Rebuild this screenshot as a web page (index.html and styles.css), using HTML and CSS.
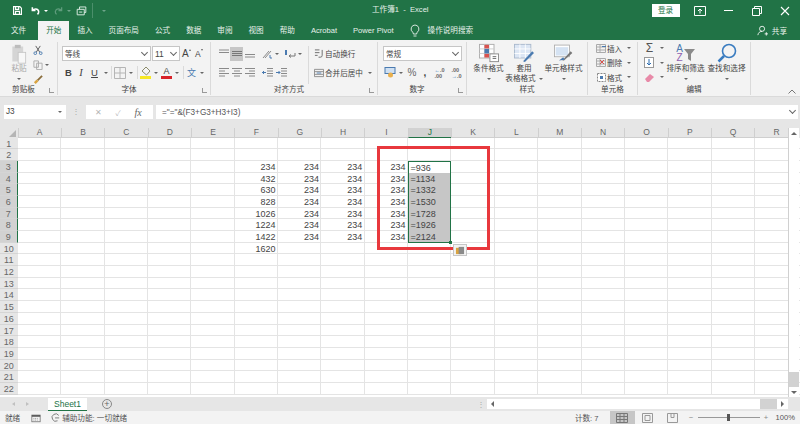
FILE: index.html
```html
<!DOCTYPE html>
<html lang="zh-CN">
<head>
  <meta charset="UTF-8" />
  <title>工作簿1 - Excel</title>
  <link rel="stylesheet" href="styles.css">
</head>
<body>
  <div class="app">
    <div class="titlebar">
      <div class="qat">
        <svg width="11" height="11" viewBox="0 0 14 14"><path d="M2 2h8l2 2v8H2z M4.500 2v3.500h4V2 M4.500 12V8h5v4" fill="none" stroke="#fff" stroke-width="1.500"/></svg>
        <svg class="q-undo" width="11" height="11" viewBox="0 0 14 14"><path d="M3 3v4h4 M3.500 7C5 4.500 10 4 11 8c.3 1.500-.5 3-1.500 4" fill="none" stroke="#fff" stroke-width="2"/></svg>
        <span class="caret white q-tight"></span>
        <svg width="11" height="11" viewBox="0 0 14 14"><path d="M11 3v4H7 M10.500 7C9 4.500 4 4 3 8c-.3 1.500.5 3 1.500 4" fill="none" stroke="#5f9c7c" stroke-width="1.600"/></svg>
        <span class="caret dim q-tight"></span>
        <svg width="11" height="11" viewBox="0 0 14 14"><path d="M1.500 5.500h9v7h-9z M4.500 5.500V2.500h8v7h-2 M4 9h4" fill="none" stroke="#dfeee6" stroke-width="1.200"/></svg>
        <span class="qat-sep"></span>
        <span class="caret dim qat-more"></span>
      </div>
      <div class="doc-title">工作簿1&nbsp; -&nbsp; Excel</div>
      <div class="win">
        <span class="login">登录</span>
        <svg width="12" height="10" viewBox="0 0 12 10"><path d="M.5.500h11v9H.5z M6 7.500V3 M4 5l2-2 2 2" fill="none" stroke="#fff"/></svg>
        <span class="win-min"></span>
        <svg width="10" height="10" viewBox="0 0 10 10"><path d="M.5 2.500h7v7h-7z M2.500 2.500v-2h7v7h-2" fill="none" stroke="#fff"/></svg>
        <svg width="10" height="10" viewBox="0 0 10 10"><path d="M1 1l8 8M9 1L1 9" stroke="#fff" stroke-width="1.100"/></svg>
      </div>
    </div>

    <div class="tabs">
      <span class="tab">文件</span>
      <span class="tab active">开始</span>
      <span class="tab">插入</span>
      <span class="tab">页面布局</span>
      <span class="tab">公式</span>
      <span class="tab">数据</span>
      <span class="tab">审阅</span>
      <span class="tab">视图</span>
      <span class="tab">帮助</span>
      <span class="tab">Acrobat</span>
      <span class="tab">Power Pivot</span>
      <span class="tab search">
        <svg width="10" height="14" viewBox="0 0 10 14"><path d="M5 1a4 4 0 0 0-2.300 7.200c.5.500.6 1 .6 1.800h3.400c0-.8.100-1.300.6-1.800A4 4 0 0 0 5 1z M3.500 12h3" fill="none" stroke="#fff" stroke-width=".8"/></svg>
        操作说明搜索
      </span>
      <span class="share">
        <svg width="11" height="11" viewBox="0 0 13 13"><circle cx="6" cy="4.500" r="3" fill="none" stroke="#fff"/><path d="M1 12c.5-3 2.500-4.500 5-4.500 M9 10.500h4 M11 8.500v4" fill="none" stroke="#fff"/></svg>
        共享
      </span>
    </div>

    <div class="ribbon">
      <section class="group g-clip">
        <div class="group-body clip">
          <div class="paste">
            <svg width="18" height="20" viewBox="0 0 18 24"><rect x="1" y="3" width="13" height="18" fill="#d5d5d5"/><rect x="4" y="1" width="7" height="4" fill="#bdbdbd"/><rect x="8" y="10" width="9" height="13" fill="#f7f7f7" stroke="#c4c4c4"/></svg>
            <span class="dim-text">粘贴</span>
            <span class="caret"></span>
          </div>
          <div class="clip-tools">
            <svg width="10" height="10" viewBox="0 0 11 11"><path d="M3 1l4.500 7M8 1L3.500 8" stroke="#555"/><circle cx="2.500" cy="9" r="1.500" fill="none" stroke="#4a7ab0"/><circle cx="8.500" cy="9" r="1.500" fill="none" stroke="#4a7ab0"/></svg>
            <span class="tool-line">
              <svg width="10" height="10" viewBox="0 0 11 11"><path d="M1 1h5v7H1z M4 3.500h6v7H4z" fill="#f3f3f3" stroke="#aaa"/></svg>
              <span class="caret"></span>
            </span>
            <svg width="10" height="10" viewBox="0 0 11 11"><path d="M5 6l5-5" stroke="#8a6d3b" stroke-width="2"/><path d="M1 8l3-3 2 2-3 3z" fill="#d9a441"/></svg>
          </div>
        </div>
        <div class="group-label pad">剪贴板<i class="launcher"></i></div>
      </section>

      <section class="group g-font">
        <div class="group-body rows">
          <div class="line">
            <span class="select font-name">等线<i class="chev"></i></span>
            <span class="select font-size">11<i class="chev"></i></span>
            <span class="size-btn">A<sup class="up-mark"></sup></span>
            <span class="size-btn small">A<sup class="down-mark"></sup></span>
          </div>
          <div class="line font-tools">
            <b class="glyph">B</b>
            <i class="glyph ital">I</i>
            <u class="glyph">U</u>
            <span class="caret"></span>
            <span class="vsep"></span>
            <svg width="12" height="12" viewBox="0 0 12 12"><path d="M.5.500h11v11H.5z M6 .5v11 M.5 6h11" fill="none" stroke="#b5b5b5"/></svg>
            <span class="caret"></span>
            <span class="vsep"></span>
            <span class="swatch-icon">
              <svg width="12" height="9" viewBox="0 0 12 9"><path d="M6 0l4 4-3.500 4L2 4z" fill="#f5f5f5" stroke="#8b8b6a"/></svg>
              <i class="swatch yellow"></i>
            </span>
            <span class="caret"></span>
            <span class="swatch-icon">
              <span class="a-mark">A</span>
              <i class="swatch red"></i>
            </span>
            <span class="caret"></span>
            <span class="vsep"></span>
            <span class="wen">文</span>
            <span class="caret"></span>
          </div>
        </div>
        <div class="group-label pad">字体<i class="launcher"></i></div>
      </section>

      <section class="group g-align">
        <div class="group-body align-body">
          <div class="rows align-icons">
            <div class="line">
              <span class="al"><svg width="10" height="9" viewBox="0 0 10 9"><path d="M0 1h10M0 3.500h10" stroke="#8a8a8a"/></svg></span>
              <span class="al on"><svg width="10" height="9" viewBox="0 0 10 9"><path d="M0 2.500h10M0 4.500h10M0 6.500h10" stroke="#777"/></svg></span>
              <span class="al"><svg width="10" height="9" viewBox="0 0 10 9"><path d="M0 5.500h10M0 8h10" stroke="#8a8a8a"/></svg></span>
              <span class="al-gap"></span>
              <span class="al tall"><svg width="11" height="10" viewBox="0 0 11 10"><path d="M1 9l6-7M3 9l6-7" stroke="#8a8a8a"/><path d="M8 6v3h2" fill="none" stroke="#4a7ab0"/></svg></span>
              <span class="caret"></span>
              <span class="al tall push"><svg width="11" height="10" viewBox="0 0 11 10"><path d="M1 1v5" stroke="#4a7ab0" stroke-width="2"/><path d="M4 7h6V4 M4 7l2-1.500M4 7l2 1.500" fill="none" stroke="#777"/></svg></span>
              <span class="caret"></span>
            </div>
            <div class="line">
              <span class="al"><svg width="10" height="9" viewBox="0 0 10 9"><path d="M0 .5h10M0 3h6M0 5.500h10M0 8h6" stroke="#8a8a8a"/></svg></span>
              <span class="al"><svg width="10" height="9" viewBox="0 0 10 9"><path d="M0 .5h10M2 3h6M0 5.500h10M2 8h6" stroke="#8a8a8a"/></svg></span>
              <span class="al"><svg width="10" height="9" viewBox="0 0 10 9"><path d="M0 .5h10M4 3h6M0 5.500h10M4 8h6" stroke="#8a8a8a"/></svg></span>
              <span class="al-gap"></span>
              <span class="al tall"><svg width="11" height="9" viewBox="0 0 11 9"><path d="M5 .5h6M5 3h6M5 5.500h6M5 8h6" stroke="#8a8a8a"/><path d="M4 4.500H0M2 3L.5 4.500 2 6" fill="none" stroke="#4a7ab0"/></svg></span>
              <span class="al"><svg width="11" height="9" viewBox="0 0 11 9"><path d="M5 .5h6M5 3h6M5 5.500h6M5 8h6" stroke="#8a8a8a"/><path d="M0 4.500h4M2.500 3L4 4.500 2.500 6" fill="none" stroke="#4a7ab0"/></svg></span>
            </div>
          </div>
          <span class="vsep block"></span>
          <div class="rows text-tools">
            <div class="line text-tool">
              <svg width="10" height="10" viewBox="0 0 11 11"><path d="M1 1h5M1 4h5M1 7h3 M9 1v6a2 2 0 0 1-2 2H5" fill="none" stroke="#666"/></svg>
              自动换行
            </div>
            <div class="line text-tool">
              <svg width="10" height="10" viewBox="0 0 11 11"><path d="M.5 1.500h10v8H.5z M.5 4h10M.5 7h10" fill="none" stroke="#8a8a8a"/><path d="M3 5.500h5" stroke="#4a7ab0"/></svg>
              合并后居中
              <span class="caret"></span>
            </div>
          </div>
        </div>
        <div class="group-label pad">对齐方式<i class="launcher"></i></div>
      </section>

      <section class="group g-num">
        <div class="group-body rows">
          <div class="line"><span class="select num-format">常规<i class="chev"></i></span></div>
          <div class="line num-tools">
            <svg width="13" height="11" viewBox="0 0 12 11"><rect x=".5" y=".5" width="10" height="6" fill="#cfe0f2" stroke="#4a7ab0"/><circle cx="6" cy="8" r="2.500" fill="#e9b04e"/></svg>
            <span class="caret"></span>
            <span class="num-glyph pct">%</span>
            <b class="num-glyph comma">,</b>
            <span class="decimals"><em>←</em>.0<br>.00</span>
            <span class="decimals">.00<br><em>→</em>.0</span>
          </div>
        </div>
        <div class="group-label pad">数字<i class="launcher"></i></div>
      </section>

      <section class="group g-style">
        <div class="group-body bigs">
          <div class="big b-cond">
            <svg width="20" height="20" viewBox="0 0 22 20"><rect x=".5" y=".5" width="16" height="15" fill="#fff" stroke="#aaa"/><path d="M6 .5v15M11 .5v15M.5 5.500h16M.5 10.500h16" stroke="#ccc"/><rect x="6" y="1" width="5" height="4" fill="#d9534f"/><rect x="6" y="5.500" width="5" height="5" fill="#4a7ab0"/><rect x="6" y="11" width="5" height="4" fill="#d9534f"/><rect x="12" y="11" width="9.500" height="8.500" fill="#fff" stroke="#888"/><path d="M15 14h4M15 16h4" stroke="#666"/></svg>
            <span>条件格式</span>
            <span class="caret"></span>
          </div>
          <div class="big b-table">
            <svg width="20" height="20" viewBox="0 0 22 20"><rect x=".5" y=".5" width="18" height="15" fill="#dce6f4" stroke="#a9b8cc"/><path d="M6.500 .5v15M12.500 .5v15M.5 5.500h18M.5 10.500h18" stroke="#fff"/><path d="M10 19l10-11 2 2-10 10z" fill="#4a7ab0"/></svg>
            <span>套用<br>表格格式<i class="caret inline"></i></span>
          </div>
          <div class="big b-cell">
            <svg width="20" height="20" viewBox="0 0 24 20"><rect x=".5" y=".5" width="18" height="14" fill="#fff" stroke="#aaa"/><rect x="2" y="3" width="15" height="10" fill="#d5e3f3"/><path d="M10 19l10-11 2 2-10 9z" fill="#777"/><path d="M6 19l5-4 2 3z" fill="#4a7ab0"/></svg>
            <span>单元格样式</span>
            <span class="caret"></span>
          </div>
        </div>
        <div class="group-label">样式</div>
      </section>

      <section class="group g-cells">
        <div class="group-body stack">
          <div class="stack-line">
            <svg width="11" height="11" viewBox="0 0 11 11"><path d="M.5 1.500h9v8h-9z M.5 4h9M.5 7h9M4 1.500v8" fill="none" stroke="#aaa"/><path d="M6 3.500h4" stroke="#4a7ab0"/></svg>
            插入<span class="caret"></span>
          </div>
          <div class="stack-line">
            <svg width="11" height="11" viewBox="0 0 11 11"><path d="M.5 1.500h9v8h-9z M.5 4h9M.5 7h9M4 1.500v8" fill="none" stroke="#aaa"/><path d="M4 3l4 4M8 3L4 7" stroke="#d9534f"/></svg>
            删除<span class="caret"></span>
          </div>
          <div class="stack-line">
            <svg width="11" height="11" viewBox="0 0 11 11"><path d="M1.500 1.500h8v8h-8z" fill="#fff" stroke="#888" stroke-dasharray="2 1"/><rect x="4" y="4" width="3" height="3" fill="#4a7ab0"/></svg>
            格式<span class="caret"></span>
          </div>
        </div>
        <div class="group-label">单元格</div>
      </section>

      <section class="group g-edit">
        <div class="group-body edit-body">
          <div class="edit-stack">
            <div class="stack-line"><span class="sigma">Σ</span><span class="caret"></span></div>
            <div class="stack-line">
              <svg width="11" height="11" viewBox="0 0 11 11"><rect x=".5" y=".5" width="9" height="10" fill="#fff" stroke="#999"/><path d="M5 2v6M3 6l2 2 2-2" fill="none" stroke="#2b6cb0"/></svg>
              <span class="caret"></span>
            </div>
            <div class="stack-line">
              <svg width="11" height="11" viewBox="0 0 11 11"><path d="M1 7l5-5 4 3-5 5H3z" fill="#e88aa8"/></svg>
              <span class="caret"></span>
            </div>
          </div>
          <div class="big b-sort">
            <div class="sort-icon">
              <span class="az"><em>A</em><em class="z">Z</em></span>
              <svg width="11" height="12" viewBox="0 0 11 12"><path d="M0 0h11L7 5v7L4 10V5z" fill="#8a8a8a"/></svg>
            </div>
            <span>排序和筛选</span>
            <span class="caret"></span>
          </div>
          <div class="big b-find">
            <svg width="20" height="20" viewBox="0 0 20 20"><circle cx="12" cy="8" r="6.500" fill="none" stroke="#3a7cc0" stroke-width="1.600"/><path d="M7 13l-5.500 5.500" stroke="#3a7cc0" stroke-width="2.500"/></svg>
            <span>查找和选择</span>
            <span class="caret"></span>
          </div>
        </div>
        <div class="group-label">编辑</div>
      </section>

      <div class="ribbon-end">
        <svg width="8" height="5" viewBox="0 0 8 5"><path d="M.5 4.500L4 1l3.500 3.500" fill="none" stroke="#777"/></svg>
      </div>
    </div>

    <div class="formula-bar">
      <div class="name-box">J3<span class="caret"></span></div>
      <div class="fb-dots">⋮</div>
      <div class="fx-box">
        <span class="fx-btn">✕</span>
        <span class="fx-btn">✓</span>
        <span class="fx-btn fx">fx</span>
      </div>
      <div class="formula">="="&amp;(F3+G3+H3+I3)<i class="chev"></i></div>
    </div>

    <div class="sheet">
      <div class="row head">
        <span class="corner"><i></i></span>
        <span class="ch">A</span><span class="ch">B</span><span class="ch">C</span><span class="ch">D</span><span class="ch">E</span><span class="ch">F</span><span class="ch">G</span><span class="ch">H</span><span class="ch">I</span><span class="ch picked">J</span><span class="ch">K</span><span class="ch">L</span><span class="ch">M</span><span class="ch">N</span><span class="ch">O</span><span class="ch">P</span><span class="ch">Q</span><span class="ch">R</span>
      </div>
      <div class="row"><span class="rh">1</span></div>
      <div class="row"><span class="rh">2</span></div>
      <div class="row"><span class="rh picked">3</span><span class="c f">234</span><span class="c g">234</span><span class="c h">234</span><span class="c i">234</span><span class="c j active-cell">=936</span></div>
      <div class="row"><span class="rh picked">4</span><span class="c f">432</span><span class="c g">234</span><span class="c h">234</span><span class="c i">234</span><span class="c j sel">=1134</span></div>
      <div class="row"><span class="rh picked">5</span><span class="c f">630</span><span class="c g">234</span><span class="c h">234</span><span class="c i">234</span><span class="c j sel">=1332</span></div>
      <div class="row"><span class="rh picked">6</span><span class="c f">828</span><span class="c g">234</span><span class="c h">234</span><span class="c i">234</span><span class="c j sel">=1530</span></div>
      <div class="row"><span class="rh picked">7</span><span class="c f">1026</span><span class="c g">234</span><span class="c h">234</span><span class="c i">234</span><span class="c j sel">=1728</span></div>
      <div class="row"><span class="rh picked">8</span><span class="c f">1224</span><span class="c g">234</span><span class="c h">234</span><span class="c i">234</span><span class="c j sel">=1926</span></div>
      <div class="row"><span class="rh picked">9</span><span class="c f">1422</span><span class="c g">234</span><span class="c h">234</span><span class="c i">234</span><span class="c j sel last">=2124</span></div>
      <div class="row"><span class="rh">10</span><span class="c f">1620</span></div>
      <div class="row"><span class="rh">11</span></div>
      <div class="row"><span class="rh">12</span></div>
      <div class="row"><span class="rh">13</span></div>
      <div class="row"><span class="rh">14</span></div>
      <div class="row"><span class="rh">15</span></div>
      <div class="row"><span class="rh">16</span></div>
      <div class="row"><span class="rh">17</span></div>
      <div class="row"><span class="rh">18</span></div>
      <div class="row"><span class="rh">19</span></div>
      <div class="row"><span class="rh">20</span></div>
      <div class="row"><span class="rh">21</span></div>
      <div class="row"><span class="rh">22</span></div>

      <div class="vscroll">
        <span class="sb-btn"><i class="tri up"></i></span>
        <span class="sb-thumb"></span>
        <span class="sb-track"></span>
        <span class="sb-btn"><i class="tri down"></i></span>
      </div>
      <div class="red-box"></div>
      <div class="paste-tag">
        <svg width="10" height="9" viewBox="0 0 11 10"><rect x="1" y="2" width="6" height="7" fill="#d9a441"/><rect x="4" y="1" width="6" height="8" fill="#8a8a8a"/></svg>
      </div>
    </div>

    <div class="sheet-tabs">
      <span class="nav-tri left"></span>
      <span class="nav-tri right"></span>
      <span class="sheet-tab">Sheet1</span>
      <span class="add-sheet">+</span>
      <span class="tab-dots">⋮</span>
      <div class="hscroll">
        <span class="h-btn"><i class="tri left"></i></span>
        <span class="h-thumb"></span>
        <span class="h-track"></span>
        <span class="h-btn"><i class="tri right"></i></span>
      </div>
    </div>

    <div class="statusbar">
      <span class="st-text">就绪</span>
      <svg width="10" height="10" viewBox="0 0 12 11"><rect x="1" y="2" width="10" height="8" fill="none" stroke="#777"/><path d="M1 3h10" stroke="#555" stroke-width="2"/><path d="M3 6h6M3 8h6" stroke="#888" stroke-dasharray="1 1"/></svg>
      <span class="st-access">
        <svg width="9" height="9" viewBox="0 0 11 11"><path d="M9.500 3A4.500 4.500 0 1 0 8 9.500 M5 6h5" fill="none" stroke="#666"/></svg>
        辅助功能: 一切就绪
      </span>
      <span class="st-right">
        <span class="st-count">计数: 7</span>
        <span class="view on"><svg width="12" height="10" viewBox="0 0 12 10"><path d="M.5.500h11v9H.5z M4 .5v9M8 .5v9M.5 3.500h11M.5 6.500h11" fill="none" stroke="#777"/></svg></span>
        <span class="view"><svg width="11" height="10" viewBox="0 0 11 10"><path d="M.5.500h10v9H.5z M3 2.500h5v5H3z" fill="none" stroke="#999"/></svg></span>
        <span class="view"><svg width="11" height="10" viewBox="0 0 11 10"><path d="M.5.500h10v9H.5z M4 .5v4h3v-4" fill="none" stroke="#999"/></svg></span>
        <span class="zoom-sign">−</span>
        <span class="zoom-track"><i></i></span>
        <span class="zoom-sign">+</span>
        <span class="zoom-pct">100%</span>
      </span>
    </div>
  </div>
</body>
</html>
```

FILE: styles.css
```css
* {
  box-sizing: border-box;
}

body {
  margin: 0;
  font-family: "Liberation Sans", "Noto Sans CJK SC", sans-serif;
  font-size: 7.600px;
  color: #444;
  background: #e6e6e6;
}

svg {
  display: block;
  flex: none;
}

.app {
  width: 800px;
  height: 424px;
  overflow: hidden;
  display: flex;
  flex-direction: column;
}

/* title bar + tabs */
.titlebar {
  height: 21px;
  background: #217346;
  color: #e6f1ea;
  display: flex;
  align-items: center;
  position: relative;
  flex: none;
}

.qat {
  display: flex;
  align-items: center;
  gap: 5px;
  padding-left: 12px;
}

.q-undo {
  margin-left: 2px;
}

.q-tight {
  margin-left: -2px;
}

.qat-sep {
  width: 1px;
  height: 15px;
  background: #4b8f6b;
}

.qat-more {
  margin-left: 4px;
}

.doc-title {
  position: absolute;
  left: 372px;
  top: 4px;
  line-height: 12px;
}

.win {
  margin-left: auto;
  display: flex;
  align-items: center;
  gap: 18.500px;
  padding-right: 10px;
}

.login {
  width: 28px;
  height: 13px;
  background: #fff;
  color: #217346;
  text-align: center;
  line-height: 13px;
  margin-right: -4.500px;
}

.win-min {
  width: 9px;
  height: 1px;
  background: #fff;
}

.tabs {
  height: 19px;
  background: #217346;
  color: #e6f1ea;
  display: flex;
  align-items: center;
  padding-left: 3px;
  flex: none;
}

.tab {
  height: 19px;
  line-height: 19px;
  padding: 0 8px;
  white-space: nowrap;
}

.tab.active {
  background: #f3f3f3;
  color: #217346;
  margin-left: 4px;
}

.tab.search {
  display: flex;
  align-items: center;
  gap: 8px;
}

.share {
  margin-left: auto;
  padding-right: 13px;
  display: flex;
  align-items: center;
  gap: 4px;
}

/* ribbon */
.ribbon {
  height: 57px;
  background: #f3f3f3;
  display: flex;
  border-bottom: 1px solid #dadada;
  flex: none;
}

.group {
  border-right: 1px solid #dadada;
  display: flex;
  flex-direction: column;
  flex: none;
  margin: 2px 0 1px;
}

.g-clip { width: 58px; }
.g-font { width: 153px; }
.g-align { width: 167px; }
.g-num { width: 89px; }
.g-style { width: 121px; }
.g-cells { width: 50px; }
.g-edit { width: 113px; }

.ribbon-end {
  flex: 1;
  display: flex;
  justify-content: flex-end;
  align-items: flex-end;
  padding: 0 4px 2px 0;
}

.group-body {
  flex: 1;
  min-height: 0;
}

.group-label {
  height: 10px;
  line-height: 10px;
  text-align: center;
  position: relative;
  flex: none;
}

.group-label.pad {
  padding-right: 10px;
}

.launcher {
  position: absolute;
  right: 3px;
  top: 3px;
  width: 5px;
  height: 5px;
  border-left: 1px solid #999;
  border-bottom: 1px solid #999;
}

.rows {
  display: flex;
  flex-direction: column;
  gap: 4px;
  padding: 4px 0 0 4px;
}

.line {
  display: flex;
  align-items: center;
  height: 15px;
}

.caret {
  display: inline-block;
  width: 0;
  height: 0;
  flex: none;
  border-left: 2px solid transparent;
  border-right: 2px solid transparent;
  border-top: 2px solid #666;
}

.caret.white { border-top-color: #fff; }
.caret.dim { border-top-color: #6ea58a; }
.caret.inline { margin-left: 3px; vertical-align: middle; }

.chev {
  width: 5px;
  height: 5px;
  border-right: 1px solid #666;
  border-bottom: 1px solid #666;
  transform: rotate(45deg);
  margin: -3px 3px 0 auto;
  display: block;
  flex: none;
}

.vsep {
  width: 1px;
  height: 13px;
  background: #dadada;
  flex: none;
}

.vsep.block {
  height: 38px;
  margin: 4px 5px 0 3px;
}

/* clipboard */
.clip {
  display: flex;
  padding: 2px 0 0 10px;
  gap: 5px;
}

.paste {
  width: 18px;
  display: flex;
  flex-direction: column;
  align-items: center;
}

.dim-text {
  line-height: 10px;
  white-space: nowrap;
  color: #a8a8a8;
}

.paste .caret {
  margin-top: 4px;
}

.clip-tools {
  display: flex;
  flex-direction: column;
  gap: 5px;
  padding-top: 1px;
}

.tool-line {
  display: flex;
  align-items: center;
  gap: 2px;
}

/* font */
.select {
  height: 15px;
  background: #fff;
  border: 1px solid #c6c6c6;
  display: flex;
  align-items: center;
  padding-left: 2px;
}

.font-name { width: 89px; }
.font-size { width: 28px; margin-left: 1px; font-size: 8.500px; }

.size-btn {
  font-size: 10px;
  margin-left: 2px;
  width: 12px;
  line-height: 14px;
  position: relative;
}

.size-btn.small {
  font-size: 8.500px;
  margin-left: 1px;
}

.up-mark,
.down-mark {
  position: absolute;
  left: 7px;
  top: 2px;
  width: 0;
  height: 0;
  border-left: 1.500px solid transparent;
  border-right: 1.500px solid transparent;
}

.up-mark { border-bottom: 2px solid #666; }
.down-mark { border-top: 2px solid #666; left: 6px; }

.font-tools {
  display: grid;
  grid-template-columns: 13px 12px 15px 8px 3px 14px 8px 4px 13px 8px 13px 8px 4px 13px 8px;
  justify-items: center;
  align-items: center;
}

.glyph {
  font-size: 9.500px;
  text-align: center;
  font-family: "Liberation Sans", sans-serif;
}

.glyph.ital {
  font-family: "Liberation Serif", serif;
  font-size: 10.500px;
}

.swatch-icon {
  width: 12px;
  display: flex;
  flex-direction: column;
  align-items: center;
}

.swatch {
  width: 11px;
  height: 3px;
  display: block;
}

.yellow { background: #f7e825; }
.red { background: #d8232a; }

.a-mark {
  font-size: 9px;
  line-height: 9px;
}

.wen {
  color: #4a7ab0;
  font-size: 9px;
}

/* alignment */
.align-body {
  display: flex;
}

.align-icons {
  width: 94px;
  padding-left: 6px;
}

.al {
  width: 13px;
  height: 14px;
  display: flex;
  align-items: center;
  justify-content: center;
  flex: none;
}

.al.on { background: #c6c6c6; }
.al.tall { width: 15px; }
.al.push { margin-left: 4px; }

.al-gap {
  width: 4px;
  flex: none;
}

.text-tools {
  padding-left: 0;
}

.text-tool {
  white-space: nowrap;
}

.text-tool svg {
  margin-right: 1px;
}

.text-tool .caret {
  margin-left: 5px;
}

/* number */
.num-format {
  width: 79px;
  margin-left: 1px;
}

.num-tools {
  padding-left: 1px;
  display: grid;
  grid-template-columns: 14px 8px 14px 12px 17px 17px;
  justify-items: center;
  align-items: center;
}

.num-glyph {
  font-size: 10px;
}

.pct { color: #666; }

.decimals {
  font-size: 5.500px;
  line-height: 6px;
  font-weight: bold;
  color: #666;
}

.decimals em {
  font-style: normal;
  color: #3a7cc0;
}

/* styles + editing */
.bigs {
  display: flex;
  padding-left: 5px;
}

.big {
  display: flex;
  flex-direction: column;
  align-items: center;
  padding-top: 1px;
  line-height: 10px;
  text-align: center;
  white-space: nowrap;
}

.big svg {
  margin-bottom: 1px;
}

.big > .caret {
  margin-top: 4px;
}

.b-cond { width: 33px; }
.b-table { width: 38px; }
.b-cell { width: 41px; }

/* cells */
.stack {
  display: flex;
  flex-direction: column;
  gap: 3.500px;
  padding: 0.500px 0 0 8px;
}

.stack-line {
  display: flex;
  align-items: center;
  height: 11px;
  white-space: nowrap;
}

.stack-line .caret {
  margin-left: 5px;
}

.stack-line svg {
  margin-right: 0;
}

.edit-body {
  display: flex;
}

.edit-stack {
  width: 27px;
  padding: 0.500px 0 0 6px;
  display: flex;
  flex-direction: column;
  gap: 3.500px;
  flex: none;
}

.sigma {
  font-size: 12px;
  width: 11px;
  text-align: center;
  color: #555;
}

.b-sort { width: 41px; }
.b-find { width: 41px; }

.sort-icon {
  display: flex;
  align-items: center;
  height: 20px;
  margin-bottom: 1px;
  gap: 1px;
}

.sort-icon svg {
  margin: 3px 0 0;
}

.az {
  display: flex;
  flex-direction: column;
  font-size: 10px;
  line-height: 9.500px;
}

.az em {
  font-style: normal;
  color: #4a7ab0;
}

.az .z { color: #8e5fb0; }

/* formula bar */
.formula-bar {
  height: 31px;
  padding: 8px 2px 9px 4px;
  display: flex;
  background: #e6e6e6;
  flex: none;
}

.name-box {
  width: 62px;
  background: #fff;
  padding-left: 2px;
  line-height: 14px;
  font-size: 8.200px;
  position: relative;
}

.name-box .caret {
  position: absolute;
  right: 4px;
  top: 6px;
}

.fb-dots {
  width: 20px;
  text-align: center;
  line-height: 14px;
  color: #aaa;
}

.fx-box {
  width: 67px;
  background: #fff;
  display: flex;
  align-items: center;
  padding-left: 6px;
  gap: 8px;
  color: #b5b5b5;
}

.fx-btn {
  width: 12px;
  text-align: center;
}

.fx-btn.fx {
  font-family: "Liberation Serif", serif;
  font-style: italic;
  color: #666;
  font-size: 10px;
}

.formula {
  flex: 1;
  margin-left: 3px;
  background: #fff;
  padding-left: 6px;
  display: flex;
  align-items: center;
  font-size: 8.200px;
  color: #555;
}

/* sheet */
.sheet {
  height: 269px;
  background: #fff;
  position: relative;
  overflow: hidden;
  flex: none;
}

.row {
  height: 11.700px;
  display: grid;
  grid-template-columns: 17.500px repeat(18, 43.350px);
  grid-template-rows: 11.700px;
  font-size: 9px;
  line-height: 10.700px;
  background-image:
    linear-gradient(#e4e4e4, #e4e4e4),
    repeating-linear-gradient(90deg, transparent 0, transparent 42.350px, #e4e4e4 42.350px, #e4e4e4 43.350px);
  background-size: 100% 1px, 100% 100%;
  background-position: 0 100%, 17.500px 0;
  background-repeat: no-repeat;
}

.row.head {
  background: #e6e6e6;
  height: 9.500px;
  grid-template-rows: 9.500px;
  line-height: 9.500px;
  font-size: 8.500px;
}

.corner {
  position: relative;
}

.corner i {
  position: absolute;
  right: 2px;
  bottom: 1px;
  border-style: solid;
  border-width: 0 0 7px 7px;
  border-color: transparent transparent #b5b5b5 transparent;
}

.ch {
  text-align: center;
  color: #666;
  border-left: 1px solid #cfcfcf;
  border-bottom: 1px solid #cfcfcf;
}

.ch.picked {
  background: #d2d2d2;
  color: #217346;
  border-bottom: 1px solid #217346;
}

.rh {
  grid-column: 1;
  background: #e6e6e6;
  text-align: center;
  color: #666;
  padding-top: 1px;
  border-bottom: 1px solid #d5d5d5;
}

.rh.picked {
  background: #d2d2d2;
  border-right: 1px solid #217346;
}

.c {
  padding: 1px 2px 0;
  color: #444;
  text-align: right;
}

.f { grid-column: 7; }
.g { grid-column: 8; }
.h { grid-column: 9; }
.i { grid-column: 10; }

.j {
  grid-column: 11;
  text-align: left;
  border-left: 1px solid #217346;
  border-right: 1px solid #217346;
}

.active-cell {
  border-top: 1px solid #217346;
  background: #fff;
}

.sel {
  background: #c6c6c6;
}

.sel.last {
  border-bottom: 1px solid #217346;
  position: relative;
}

.sel.last::after {
  content: "";
  position: absolute;
  right: -2px;
  bottom: -2px;
  width: 3px;
  height: 3px;
  background: #217346;
}

.red-box {
  position: absolute;
  left: 377px;
  top: 18px;
  width: 113px;
  height: 104px;
  border: 3px solid #e8383d;
}

.paste-tag {
  position: absolute;
  left: 453px;
  top: 116px;
  width: 14px;
  height: 12px;
  background: #f3f3f3;
  border: 1px solid #c6c6c6;
  display: flex;
  align-items: center;
  justify-content: center;
}

.vscroll {
  position: absolute;
  right: 1px;
  top: 0;
  bottom: 0;
  width: 11px;
  background: #e6e6e6;
  border-left: 1px solid #d0d0d0;
  display: flex;
  flex-direction: column;
}

.sb-btn {
  height: 10px;
  background: #fff;
  display: flex;
  align-items: center;
  justify-content: center;
  flex: none;
}

.sb-thumb {
  height: 234px;
  background: #fff;
}

.sb-track {
  flex: 1;
  background: #d2d2d2;
}

.tri {
  display: block;
  width: 0;
  height: 0;
  border-style: solid;
}

.tri.up { border-width: 0 3px 3px; border-color: transparent transparent #666; }
.tri.down { border-width: 3px 3px 0; border-color: #666 transparent transparent; }
.tri.right { border-width: 3px 0 3px 3px; border-color: transparent transparent transparent #666; }
.tri.left { border-width: 3px 3px 3px 0; border-color: transparent #666 transparent transparent; }

/* sheet tabs */
.sheet-tabs {
  height: 14px;
  background: #e6e6e6;
  display: flex;
  align-items: center;
  flex: none;
}

.nav-tri {
  width: 0;
  height: 0;
  border-style: solid;
  border-color: transparent;
}

.nav-tri.left {
  margin-left: 12px;
  border-width: 2px 3px 2px 0;
  border-right-color: #c0c0c0;
}

.nav-tri.right {
  margin-left: 11px;
  border-width: 2px 0 2px 3px;
  border-left-color: #c0c0c0;
}

.sheet-tab {
  margin-left: 19px;
  width: 39px;
  height: 13px;
  background: #fff;
  color: #217346;
  text-align: center;
  line-height: 12px;
  font-size: 8.500px;
  border-bottom: 1px solid #217346;
}

.add-sheet {
  margin-left: 15px;
  width: 10px;
  height: 10px;
  border: 1px solid #888;
  border-radius: 50%;
  text-align: center;
  line-height: 8px;
  font-size: 9px;
  color: #666;
}

.tab-dots {
  margin-left: 365px;
  width: 5px;
  color: #aaa;
}

.hscroll {
  margin-left: auto;
  margin-right: 12px;
  width: 301px;
  height: 10px;
  display: flex;
  background: #d2d2d2;
}

.h-thumb {
  flex: 1;
  background: #fff;
}

.h-track {
  width: 17px;
}

.h-btn {
  width: 11px;
  background: #fff;
  display: flex;
  align-items: center;
  justify-content: center;
}

/* status bar */
.statusbar {
  flex: 1;
  background: #f3f3f3;
  display: flex;
  align-items: center;
  padding-left: 5px;
  color: #555;
}

.statusbar > svg {
  margin-left: 11px;
}

.st-access {
  margin-left: 10px;
  display: flex;
  align-items: center;
  gap: 2px;
}

.st-right {
  margin-left: auto;
  display: flex;
  align-items: center;
  padding-right: 5px;
}

.st-count {
  margin-right: 11px;
}

.view {
  width: 25px;
  height: 13px;
  display: flex;
  align-items: center;
  justify-content: center;
}

.view.on {
  background: #c6c6c6;
}

.zoom-sign {
  width: 7px;
  margin-left: 3px;
  text-align: center;
  color: #888;
}

.zoom-track {
  width: 62px;
  height: 1px;
  background: #999;
  margin-left: 3px;
  position: relative;
}

.zoom-track i {
  position: absolute;
  left: 29px;
  top: -3px;
  width: 3px;
  height: 7px;
  background: #555;
}

.zoom-pct {
  margin-left: 6px;
}
```
